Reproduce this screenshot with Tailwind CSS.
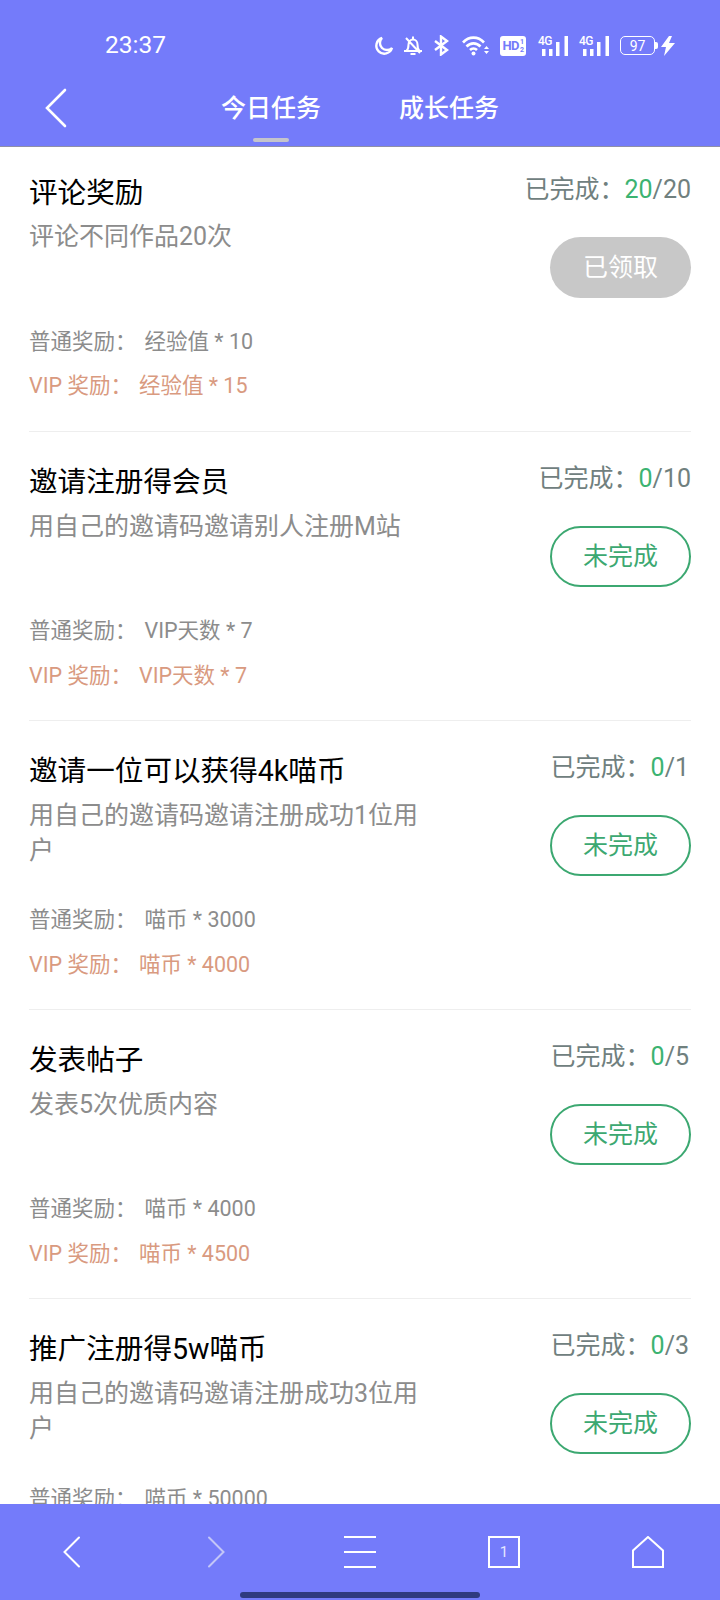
<!DOCTYPE html>
<html lang="zh-CN">
<head>
<meta charset="UTF-8">
<title>任务</title>
<script src="https://cdn.jsdelivr.net/npm/@tailwindcss/browser@4"></script>
</head>
<body class="bg-white">
<div class="flex h-[1600px] w-[720px] flex-col overflow-hidden font-['Roboto','Noto_Sans_CJK_SC',sans-serif]">

  <!-- header -->
  <header class="h-[147px] shrink-0 border-b border-[#8f8fa8] bg-[#747bfa] text-white">
    <div class="flex h-[88px] items-center pt-[3px]">
      <span class="ml-[105px] w-[269px] text-[24.500px] leading-none font-normal">23:37</span>
      <!-- moon -->
      <svg class="h-[20px] w-[20px]" viewBox="0 0 20 20" fill="none" stroke="#fff" stroke-width="2.400"><path d="M8 2a8 8 0 1 0 10 10A7 7 0 0 1 8 2z"/></svg>
      <!-- bell off -->
      <svg class="ml-[9px] h-[21px] w-[20px]" viewBox="0 0 20 21" fill="none" stroke="#fff" stroke-width="2"><path d="M1 16h18M3.500 16c2-2 2-4 2-6.500 0-2.800 2-5 4.500-5s4.500 2.200 4.500 5c0 2.500 0 4.500 2 6.500M10 1.500v3M7.500 19h5M3 3l14 15"/></svg>
      <!-- bluetooth -->
      <svg class="ml-[10px] h-[21px] w-[16px]" viewBox="0 0 16 20" fill="none" stroke="#fff" stroke-width="2.400"><path d="M2 5.500l12 9-6 4.500V1l6 4.500-12 9"/></svg>
      <!-- wifi -->
      <svg class="ml-[13px] h-[21px] w-[27px]" viewBox="0 0 27 20" fill="none" stroke="#fff" stroke-width="2.600"><path d="M1 7c6-6.500 15-6.500 21 0M4.500 11c4-4.200 10-4.200 14 0M8 14.500c2-2 5-2 7 0"/><circle cx="11.500" cy="18" r="2" fill="#fff" stroke="none"/><path d="M22 13.500l2.500-3 2.500 3zM22 15.500l2.500 3 2.500-3z" fill="#fff" stroke="none"/></svg>
      <!-- HD badge -->
      <span class="ml-[11px] flex h-[20px] w-[26px] items-center justify-center rounded-[3px] bg-white text-[13px] leading-none font-bold tracking-[-0.5px] text-[#747bfa]">HD<span class="ml-[1px] flex flex-col text-[7px] leading-[8px]"><span>1</span><span>2</span></span></span>
      <!-- 4G signal -->
      <span class="relative ml-[12px] h-[20px] w-[30px]">
        <span class="absolute top-[-1px] left-0 text-[12px] leading-none font-medium tracking-[-0.5px]">4G</span>
        <svg class="absolute inset-0" width="30" height="20" viewBox="0 0 30 20" fill="#fff"><rect x="4" y="13" width="3.500" height="7"/><rect x="11" y="13" width="3.500" height="7"/><rect x="18" y="6" width="3.500" height="14"/><rect x="26.500" y="0" width="3.500" height="20"/></svg>
      </span>
      <span class="relative ml-[11px] h-[20px] w-[30px]">
        <span class="absolute top-[-1px] left-0 text-[12px] leading-none font-medium tracking-[-0.5px]">4G</span>
        <svg class="absolute inset-0" width="30" height="20" viewBox="0 0 30 20" fill="#fff"><rect x="4" y="13" width="3.500" height="7"/><rect x="11" y="13" width="3.500" height="7"/><rect x="18" y="6" width="3.500" height="14"/><rect x="26.500" y="0" width="3.500" height="20"/></svg>
      </span>
      <!-- battery -->
      <span class="ml-[11px] flex h-[19px] w-[35px] items-center justify-center rounded-[5px] border-[1.5px] border-white text-[14px] leading-none">97</span>
      <span class="h-[7px] w-[3px] rounded-r-[2px] bg-white"></span>
      <svg class="ml-[3px] h-[20px] w-[14px]" viewBox="0 0 14 20" fill="#fff"><path d="M8 0L0 11h5l-2 9 11-13H8l3-7z"/></svg>
    </div>
    <div class="relative flex h-[58px] items-start">
      <svg class="ml-[44px] h-[40px] w-[24px]" viewBox="0 0 24 40" fill="none" stroke="#fff" stroke-width="2.600" stroke-linecap="round"><path d="M21 2L3 20l18 18"/></svg>
      <div class="ml-[153px] flex flex-col items-center pt-[3px]">
        <span class="text-[25px] leading-[36px] font-medium">今日任务</span>
        <span class="mt-[11px] h-[4px] w-[36px] rounded-full bg-[#c4c4cc]"></span>
      </div>
      <span class="ml-[78px] pt-[3px] text-[25px] leading-[36px] font-medium">成长任务</span>
    </div>
  </header>

  <!-- task list -->
  <main class="min-h-0 flex-1 overflow-hidden px-[29px]">

    <section class="flex h-[285px] justify-between border-b border-[#eeeeee] pt-[27px]">
      <div class="w-[420px]">
        <h2 class="text-[28.600px] leading-[38px] text-black">评论奖励</h2>
        <p class="mt-[7px] h-[70px] text-[25px] leading-[35px] text-[#8c8c8c]">评论不同作品20次</p>
        <p class="mt-[30px] text-[21.500px] leading-[45px] text-[#8c8c8c]">普通奖励：<span class="ml-[8px]">经验值 * 10</span></p>
        <p class="-mt-[1px] text-[21.500px] leading-[45px] text-[#d99a80]">VIP 奖励：<span class="ml-[7px]">经验值 * 15</span></p>
      </div>
      <div class="-mt-[1px] flex flex-col items-end">
        <p class="text-[25px] leading-[34px] text-[#70807e]">已完成：<span class="text-[#3cb371]">20</span>/20</p>
        <button class="mt-[30px] h-[61px] w-[141px] rounded-full bg-[#c8c8c8] text-[25px] text-white">已领取</button>
      </div>
    </section>

    <section class="flex h-[289px] justify-between border-b border-[#eeeeee] pt-[31px]">
      <div class="w-[420px]">
        <h2 class="text-[28.600px] leading-[38px] text-black">邀请注册得会员</h2>
        <p class="mt-[8px] h-[70px] text-[25px] leading-[35px] text-[#8c8c8c]">用自己的邀请码邀请别人注册M站</p>
        <p class="mt-[29px] text-[21.500px] leading-[45px] text-[#8c8c8c]">普通奖励：<span class="ml-[8px]">VIP天数 * 7</span></p>
        <p class="text-[21.500px] leading-[45px] text-[#d99a80]">VIP 奖励：<span class="ml-[7px]">VIP天数 * 7</span></p>
      </div>
      <div class="-mt-[1px] flex flex-col items-end">
        <p class="text-[25px] leading-[34px] text-[#70807e]">已完成：<span class="text-[#3cb371]">0</span>/10</p>
        <button class="mt-[30px] h-[61px] w-[141px] rounded-full border-2 border-[#3ca871] text-[25px] text-[#3ca871]">未完成</button>
      </div>
    </section>

    <section class="flex h-[289px] justify-between border-b border-[#eeeeee] pt-[31px]">
      <div class="w-[420px]">
        <h2 class="text-[28.600px] leading-[38px] text-black">邀请一位可以获得4k喵币</h2>
        <p class="mt-[8px] h-[70px] w-[400px] text-[25px] leading-[35px] text-[#8c8c8c]">用自己的邀请码邀请注册成功1位用户</p>
        <p class="mt-[29px] text-[21.500px] leading-[45px] text-[#8c8c8c]">普通奖励：<span class="ml-[8px]">喵币 * 3000</span></p>
        <p class="text-[21.500px] leading-[45px] text-[#d99a80]">VIP 奖励：<span class="ml-[7px]">喵币 * 4000</span></p>
      </div>
      <div class="-mt-[1px] flex flex-col items-end">
        <p class="mr-[2px] text-[25px] leading-[34px] text-[#70807e]">已完成：<span class="text-[#3cb371]">0</span>/1</p>
        <button class="mt-[30px] h-[61px] w-[141px] rounded-full border-2 border-[#3ca871] text-[25px] text-[#3ca871]">未完成</button>
      </div>
    </section>

    <section class="flex h-[289px] justify-between border-b border-[#eeeeee] pt-[31px]">
      <div class="w-[420px]">
        <h2 class="text-[28.600px] leading-[38px] text-black">发表帖子</h2>
        <p class="mt-[8px] h-[70px] text-[25px] leading-[35px] text-[#8c8c8c]">发表5次优质内容</p>
        <p class="mt-[29px] text-[21.500px] leading-[45px] text-[#8c8c8c]">普通奖励：<span class="ml-[8px]">喵币 * 4000</span></p>
        <p class="text-[21.500px] leading-[45px] text-[#d99a80]">VIP 奖励：<span class="ml-[7px]">喵币 * 4500</span></p>
      </div>
      <div class="-mt-[1px] flex flex-col items-end">
        <p class="mr-[2px] text-[25px] leading-[34px] text-[#70807e]">已完成：<span class="text-[#3cb371]">0</span>/5</p>
        <button class="mt-[30px] h-[61px] w-[141px] rounded-full border-2 border-[#3ca871] text-[25px] text-[#3ca871]">未完成</button>
      </div>
    </section>

    <section class="flex h-[289px] justify-between pt-[31px]">
      <div class="w-[420px]">
        <h2 class="text-[28.600px] leading-[38px] text-black">推广注册得5w喵币</h2>
        <p class="mt-[8px] h-[70px] w-[400px] text-[25px] leading-[35px] text-[#8c8c8c]">用自己的邀请码邀请注册成功3位用户</p>
        <p class="mt-[30px] text-[21.500px] leading-[45px] text-[#8c8c8c]">普通奖励：<span class="ml-[8px]">喵币 * 50000</span></p>
      </div>
      <div class="-mt-[1px] flex flex-col items-end">
        <p class="mr-[2px] text-[25px] leading-[34px] text-[#70807e]">已完成：<span class="text-[#3cb371]">0</span>/3</p>
        <button class="mt-[30px] h-[61px] w-[141px] rounded-full border-2 border-[#3ca871] text-[25px] text-[#3ca871]">未完成</button>
      </div>
    </section>
  </main>

  <!-- bottom bar -->
  <footer class="h-[96px] shrink-0 bg-[#747bfa]">
    <div class="grid h-[88px] grid-cols-5 items-start justify-items-center pt-[32px]">
      <svg class="h-[32px] w-[20px]" viewBox="0 0 20 32" fill="none" stroke="#fff" stroke-width="2" stroke-linecap="round"><path d="M17 1.500L2.500 16 17 30.500"/></svg>
      <svg class="h-[32px] w-[20px]" viewBox="0 0 20 32" fill="none" stroke="#c3c6f7" stroke-width="2" stroke-linecap="round"><path d="M3 1.500L17.500 16 3 30.500"/></svg>
      <svg class="h-[32px] w-[32px]" viewBox="0 0 32 32" fill="none" stroke="#fff" stroke-width="2"><path d="M0 1h32M0 16h32M0 31h32"/></svg>
      <span class="flex h-[32px] w-[32px] items-center justify-center border-2 border-white text-[15px] leading-none text-[#e4e6ff]">1</span>
      <svg class="h-[32px] w-[32px]" viewBox="0 0 32 32" fill="none" stroke="#fff" stroke-width="2"><path d="M1 31V14.500L16 1l15 13.500V31z"/></svg>
    </div>
    <div class="mx-auto h-[6px] w-[240px] rounded-full bg-[#2f3a80]"></div>
  </footer>
</div>
</body>
</html>
